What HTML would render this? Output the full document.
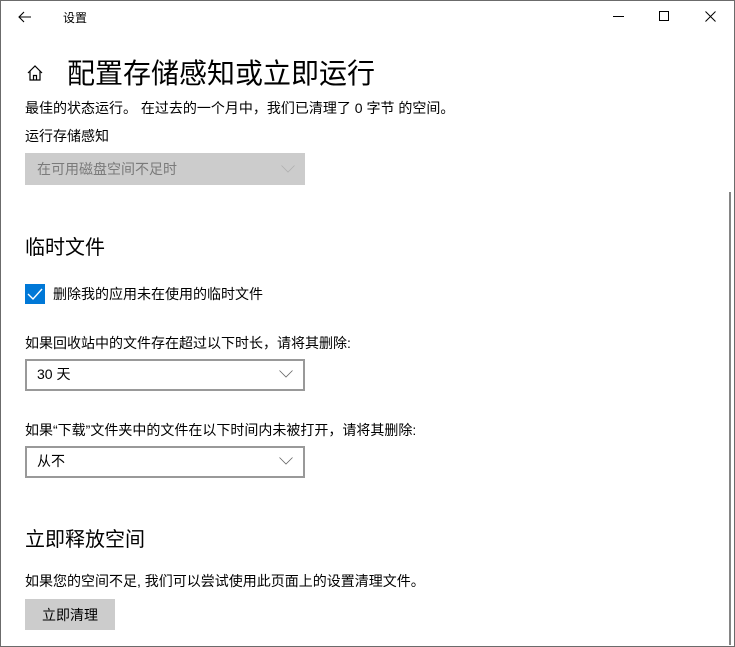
<!DOCTYPE html>
<html><head><meta charset="utf-8"><style>
html,body{margin:0;padding:0}
body{width:735px;height:647px;position:relative;overflow:hidden;background:#fff;font-family:"Liberation Sans","Noto Sans CJK SC",sans-serif;color:#000}
.frame{position:absolute;left:0;top:0;width:733px;height:645px;border:1px solid #6b6b6b}
.a{position:absolute;white-space:nowrap}
.t{font-size:14px;line-height:16px}
.dd{position:absolute;left:25px;width:276px;height:28px;border:2px solid #999;background:#fff}
.dd span{position:absolute;left:10px;top:5px;font-size:14px;line-height:16px}
.chev{position:absolute;right:10px;top:9px}
</style></head><body>
<div class="frame"></div>
<svg class="a" style="left:18px;top:11px" width="14" height="12" viewBox="0 0 14 12"><path d="M6 1L1 6L6 11M1 6H13" fill="none" stroke="#000" stroke-width="1.1"/></svg>
<div class="a t" style="left:63px;top:10px;font-size:12px">设置</div>
<svg class="a" style="left:613px;top:16px" width="12" height="2"><rect width="11" height="1" fill="#000"/></svg>
<svg class="a" style="left:659px;top:11px" width="11" height="11"><rect x="0.5" y="0.5" width="9" height="9" fill="none" stroke="#000"/></svg>
<svg class="a" style="left:705px;top:11px" width="11" height="11"><path d="M0.5 0.5L10.5 10.5M10.5 0.5L0.5 10.5" stroke="#000"/></svg>
<svg class="a" style="left:26px;top:64px" width="18" height="18" viewBox="0 0 18 18"><path d="M2 9L9 2L16 9M4 7V16H14V7M7.5 16V11.5H10.5V16" fill="none" stroke="#000" stroke-width="1.2"/></svg>
<div class="a" style="left:67px;top:56px;font-size:28px;line-height:36px">配置存储感知或立即运行</div>
<div class="a t" style="left:25px;top:100px">最佳的状态运行。 在过去的一个月中，我们已清理了 0 字节 的空间。</div>
<div class="a t" style="left:25px;top:128px">运行存储感知</div>
<div class="dd" style="top:153px;width:280px;height:32px;border:none;background:#cccccc"><span style="left:12px;top:8px;color:#7a7a7a">在可用磁盘空间不足时</span>
<svg class="chev" style="right:10px;top:12px" width="14" height="8"><path d="M0.5 0.5L7 7L13.5 0.5" fill="none" stroke="#b0b0b0" stroke-width="0.8"/></svg></div>
<div class="a" style="left:25px;top:235px;font-size:20px;line-height:26px">临时文件</div>
<div class="a" style="left:25px;top:284px;width:20px;height:20px;background:#0078d7"></div>
<svg class="a" style="left:27px;top:287px" width="16" height="14"><path d="M1 7L6 12L15 2" fill="none" stroke="#fff" stroke-width="1.4"/></svg>
<div class="a t" style="left:53px;top:286px">删除我的应用未在使用的临时文件</div>
<div class="a t" style="left:25px;top:335px">如果回收站中的文件存在超过以下时长，请将其删除:</div>
<div class="dd" style="top:359px"><span>30 天</span><svg class="chev" width="14" height="8"><path d="M0.5 0.5L7 7L13.5 0.5" fill="none" stroke="#666" stroke-width="0.8"/></svg></div>
<div class="a t" style="left:25px;top:422px">如果“下载”文件夹中的文件在以下时间内未被打开，请将其删除:</div>
<div class="dd" style="top:446px"><span>从不</span><svg class="chev" width="14" height="8"><path d="M0.5 0.5L7 7L13.5 0.5" fill="none" stroke="#666" stroke-width="0.8"/></svg></div>
<div class="a" style="left:25px;top:527px;font-size:20px;line-height:26px">立即释放空间</div>
<div class="a t" style="left:25px;top:573px">如果您的空间不足, 我们可以尝试使用此页面上的设置清理文件。</div>
<div class="a" style="left:25px;top:599px;width:90px;height:31px;background:#cccccc"></div>
<div class="a t" style="left:42px;top:607px">立即清理</div>
<div class="a" style="left:729px;top:192px;width:2px;height:453px;background:#858585"></div>
</body></html>
